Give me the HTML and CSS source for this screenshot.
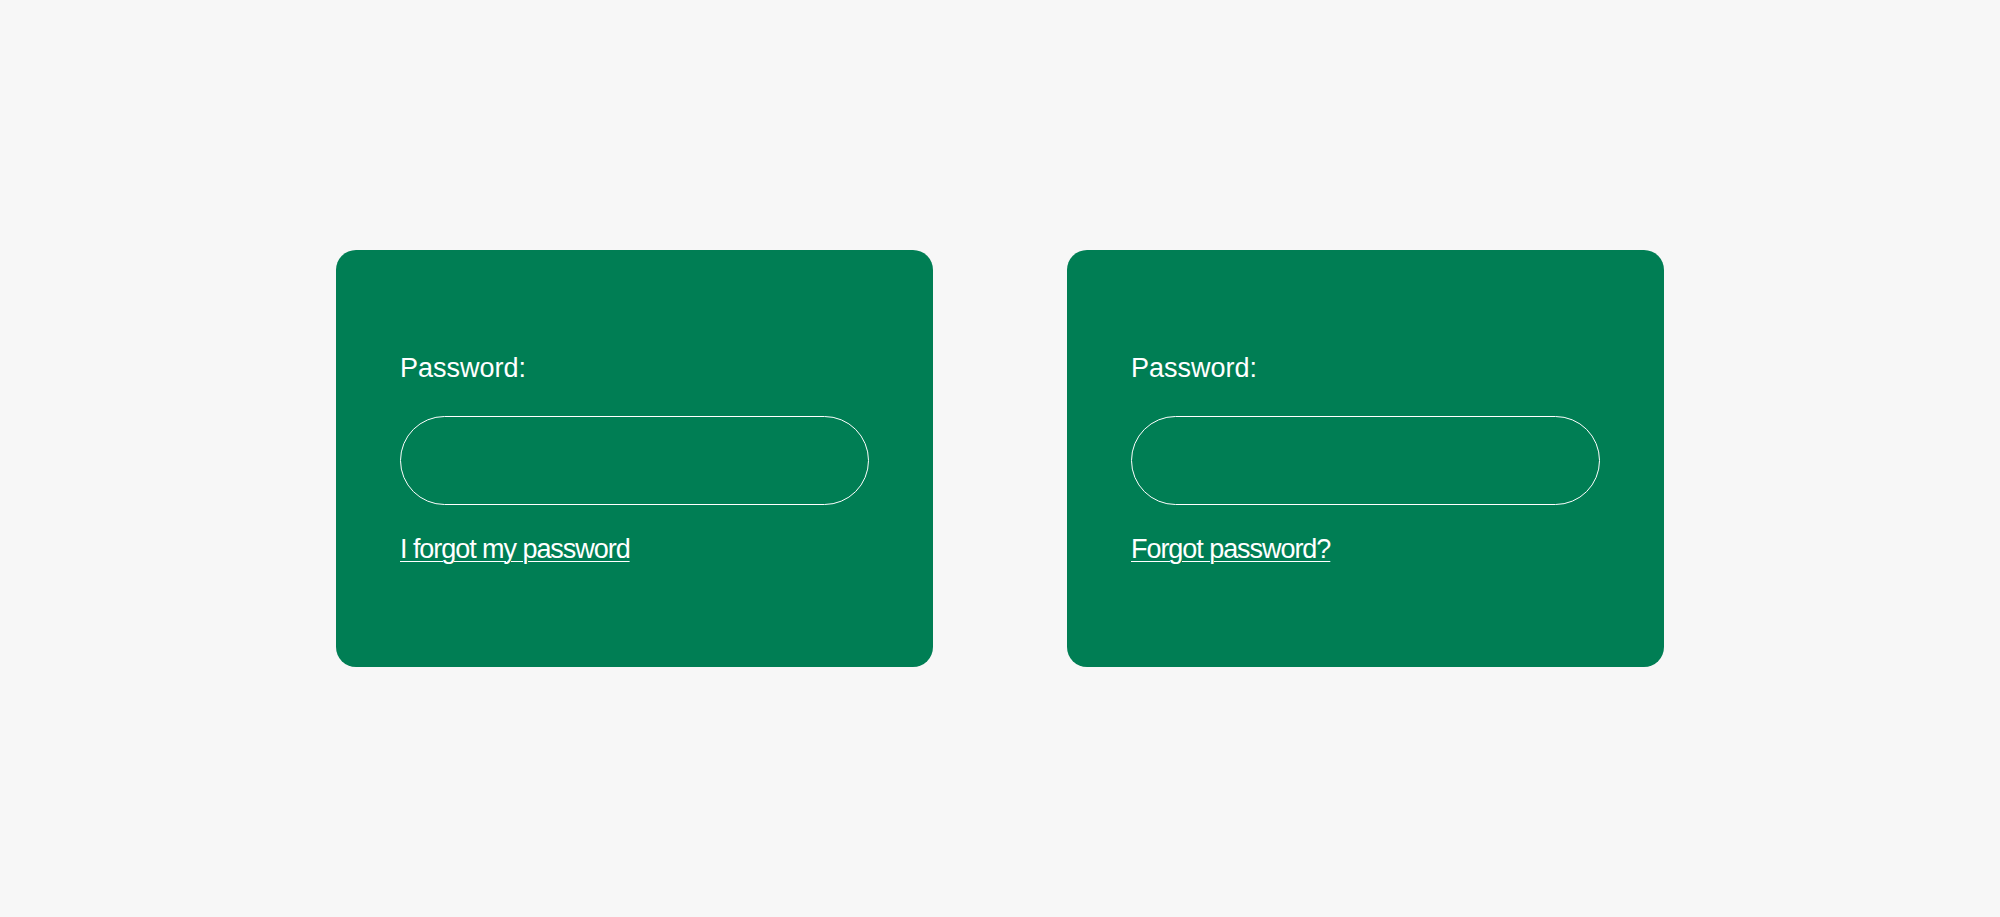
FILE: index.html
```html
<!DOCTYPE html>
<html lang="en">
<head>
<meta charset="utf-8">
<title>Password</title>
<link rel="stylesheet" href="styles.css">
</head>
<body>
<main class="stage">
  <form class="card">
    <label class="label" for="pw1">Password:</label>
    <input class="field" id="pw1" type="password">
    <a class="link" href="#">I forgot my password</a>
  </form>
  <form class="card">
    <label class="label" for="pw2">Password:</label>
    <input class="field" id="pw2" type="password">
    <a class="link" href="#">Forgot password?</a>
  </form>
</main>
</body>
</html>
```
FILE: styles.css
```css
html, body {
  margin: 0;
  padding: 0;
}
body {
  background: #f7f7f7;
  font-family: "Liberation Sans", Arial, Helvetica, sans-serif;
  color: #ffffff;
}
.stage {
  height: 917px;
  display: flex;
  align-items: flex-start;
  justify-content: center;
  gap: 134px;
  padding-top: 250px;
  box-sizing: border-box;
}
.card {
  width: 597px;
  box-sizing: border-box;
  padding: 102px 64px 102px 64px;
  background: #007e54;
  border-radius: 20px;
  display: flex;
  flex-direction: column;
  align-items: flex-start;
}
.label {
  font-size: 27px;
  line-height: 32px;
  color: #ffffff;
}
.field {
  margin-top: 32px;
  width: 100%;
  height: 89px;
  box-sizing: border-box;
  background: transparent;
  border: 1px solid #ffffff;
  border-radius: 999px;
  outline: none;
  padding: 0 32px;
  font: inherit;
  font-size: 27px;
  color: #ffffff;
}
.link {
  margin-top: 28px;
  font-size: 27px;
  line-height: 32px;
  letter-spacing: -1.05px;
  color: #ffffff;
  text-decoration: underline;
  text-decoration-thickness: 1px;
  text-underline-offset: 3px;
}
```
